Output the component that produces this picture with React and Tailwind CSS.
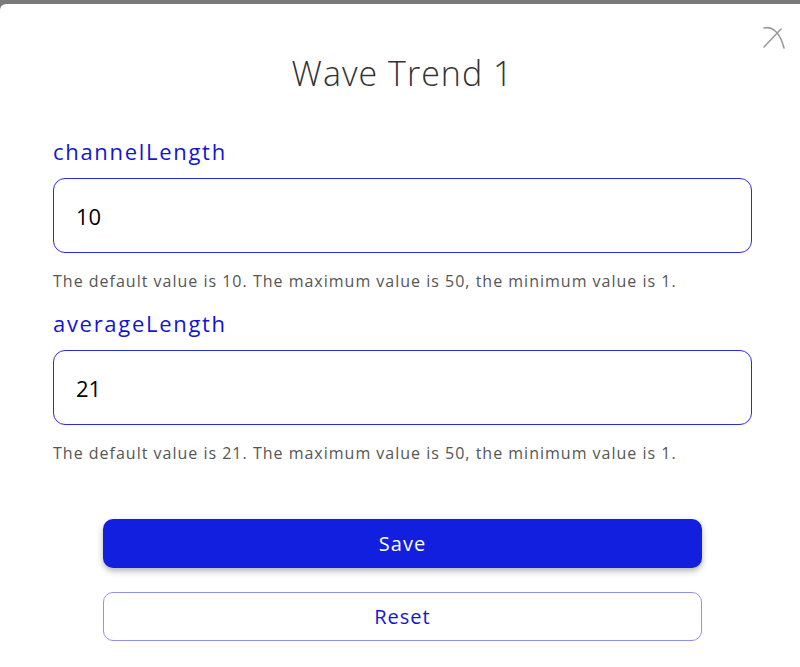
import React, { useState } from 'react';

const fields = [
  { name: 'channelLength', value: '10', def: 10 },
  { name: 'averageLength', value: '21', def: 21 },
];

const CloseIcon = () => (
  <svg width="26" height="26" viewBox="0 0 26 26" fill="none" stroke="#9a9a9a" strokeWidth="1.6" strokeLinecap="round">
    <path d="M2 4 C 10 2, 18 8, 22 24" />
    <path d="M2 23 L 19 5" />
  </svg>
);

const App = () => {
  const [values, setValues] = useState(fields.map((f) => f.value));

  return (
    <div className="min-h-[667px] bg-[#7a7a7a] pt-[4px]" style={{ fontFamily: '"Open Sans", sans-serif' }}>
      <div className="relative min-h-[663px] bg-white rounded-tl-[6px] pl-[53px] pr-[48px] pb-8">
        <button className="absolute right-[12px] top-[20px]">
          <CloseIcon />
        </button>

        <h1 className="pt-[44px] text-center text-[34px] leading-[50px] font-light tracking-[1px] text-[#333]">Wave Trend 1</h1>

        <div className="mt-[38px]">
          {fields.map((f, i) => (
            <div key={f.name} className="mb-[15px]">
              <label className="block text-[22px] leading-[30px] tracking-[1.7px] text-[#1414d6]">{f.name}</label>
              <input
                value={values[i]}
                onChange={(e) => setValues((prev) => prev.map((v, j) => (j === i ? e.target.value : v)))}
                className="mt-[12px] block w-full h-[75px] rounded-[12px] border border-[#2a2ae0] px-[22px] text-[22px] text-black outline-none"
              />
              <p className="mt-[16px] text-[16px] leading-[24px] tracking-[1px] text-[#555]">
                The default value is {f.def}. The maximum value is 50, the minimum value is 1.
              </p>
            </div>
          ))}
        </div>

        <div className="mx-[50px] mt-[54px] flex flex-col gap-[24px]">
          <button className="h-[49px] rounded-[10px] bg-[#121fdf] text-[20px] tracking-[1px] text-white shadow-[0_3px_6px_rgba(0,0,0,0.3)]">
            Save
          </button>
          <button className="h-[49px] rounded-[10px] border border-[#8f93f0] text-[20px] tracking-[1px] text-[#1414d6]">
            Reset
          </button>
        </div>
      </div>
    </div>
  );
};

export default App;
